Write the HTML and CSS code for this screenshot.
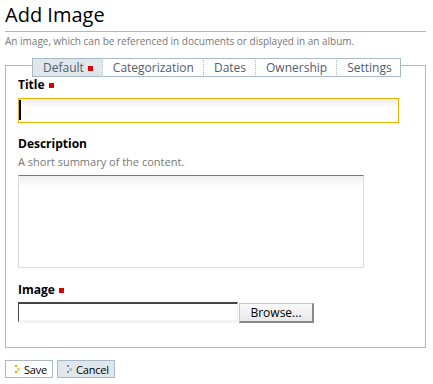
FILE: index.html
```html
<!DOCTYPE html>
<html lang="en">

<head>
    <meta charset="UTF-8">
    <title>Add Image</title>
    <link rel="stylesheet" href="styles.css">
</head>

<body>
    <h1 class="documentFirstHeading">Add Image</h1>
    <p class="documentDescription">An image, which can be referenced in documents or displayed in an album.</p>

    <form class="enableFormTabbing">
        <div class="formPanel">
            <!-- Tabs -->
            <ul class="formTabs">
                <li class="formTab selected">Default<span class="required"></span></li>
                <li class="formTab">Categorization</li>
                <li class="formTab">Dates</li>
                <li class="formTab">Ownership</li>
                <li class="formTab">Settings</li>
            </ul>

            <div class="field">
                <label class="formQuestion">Title<span class="required"></span></label>
                <div class="focusWrap">
                    <input type="text" class="inputTitle">
                    <span class="caret"></span>
                </div>
            </div>

            <div class="field">
                <label class="formQuestion">Description</label>
                <div class="formHelp">A short summary of the content.</div>
                <textarea class="inputDescription"></textarea>
            </div>

            <div class="field">
                <label class="formQuestion">Image<span class="required"></span></label>
                <div class="fileRow">
                    <span class="fileText"></span>
                    <button type="button" class="browse">Browse...</button>
                </div>
            </div>
        </div>

        <!-- Botões -->
        <div class="formControls">
            <button type="button" class="context">
                <svg width="5" height="9" viewBox="0 0 5 9">
                    <rect x="0" y="0" width="2" height="2" fill="#e8a400" />
                    <rect x="2" y="3" width="3" height="3" fill="#f2d27a" />
                    <rect x="0" y="6" width="2" height="2" fill="#e8a400" />
                </svg>
                Save
            </button>
            <button type="button" class="standalone">
                <svg width="5" height="9" viewBox="0 0 5 9">
                    <rect x="0" y="0" width="2" height="2" fill="#8194a5" />
                    <rect x="2" y="3" width="3" height="3" fill="#b6c3ce" />
                    <rect x="0" y="6" width="2" height="2" fill="#8194a5" />
                </svg>
                Cancel
            </button>
        </div>
    </form>
</body>

</html>
```

FILE: styles.css
```css
/* Geral */
body {
    margin: 0;
    padding: 0 7px 0 5px;
    font-family: 'Open Sans', sans-serif;
    background: #fff;
    color: #000;
}

.documentFirstHeading {
    margin: 0;
    padding: 3px 0 4px;
    font-size: 20px;
    line-height: 24px;
    font-weight: normal;
    border-bottom: 1px solid #a9b9c6;
}

.documentDescription {
    margin: 2px 0 0;
    font-size: 10px;
    line-height: 14px;
    color: #777;
}

/* Painel do formulário */
.formPanel {
    margin-top: 17px;
    width: 395px;
    padding: 0 12px 24px;
    border: 1px solid #a9b9c6;
}

.formTabs {
    display: flex;
    margin: -8px 0 0 14px;
    padding: 0;
    list-style: none;
}

.formTab {
    height: 17px;
    padding: 0 9px 0 10px;
    font-size: 12px;
    line-height: 17px;
    color: #4d6070;
    background: #fff;
    border-top: 1px solid #a9b9c6;
    border-bottom: 1px solid #a9b9c6;
    border-left: 1px dotted #a9b9c6;
}

.formTab:first-child {
    border-left: 1px solid #a9b9c6;
}

.formTab:last-child {
    padding-right: 8px;
    border-right: 1px solid #a9b9c6;
}

.formTab.selected {
    background: #dfe6ec;
}

.required {
    display: inline-block;
    width: 5px;
    height: 5px;
    margin-left: 4px;
    background: #dd0000;
    vertical-align: 1px;
}

.field {
    margin-top: 13px;
}

.field:first-of-type {
    margin-top: 0;
}

.formQuestion {
    display: block;
    font-size: 12px;
    line-height: 16px;
    font-weight: bold;
}

.formHelp {
    margin-top: 3px;
    font-size: 11px;
    line-height: 14px;
    color: #777;
}

/* Campos */
.focusWrap {
    position: relative;
    margin-top: 5px;
    width: 381px;
}

.inputTitle {
    display: block;
    box-sizing: border-box;
    width: 381px;
    height: 25px;
    margin: 0;
    border: 1px solid #efb000;
    background: linear-gradient(#ececec, #fff 9px);
    outline: none;
}

.caret {
    position: absolute;
    left: 1px;
    top: 2px;
    width: 2px;
    height: 20px;
    background: #000;
}

.inputDescription {
    display: block;
    box-sizing: border-box;
    width: 346px;
    height: 93px;
    margin: 6px 0 0;
    border: 1px solid #dcdcdc;
    border-top-color: #777;
    background: linear-gradient(#f0f0f0, #fff 12px);
    resize: none;
}

.field:last-child {
    margin-top: 14px;
}

.fileRow {
    display: flex;
    align-items: flex-start;
    margin-top: 4px;
}

.fileText {
    box-sizing: border-box;
    width: 220px;
    height: 21px;
    border-top: 2px solid #444;
    border-left: 1px solid #444;
    border-right: 1px solid #eee;
    border-bottom: 3px solid #f2f2f2;
}

.browse {
    box-sizing: border-box;
    height: 20px;
    width: 75px;
    margin: 1px 0 0 1px;
    padding: 0;
    font-family: 'Open Sans', sans-serif;
    font-size: 12px;
    color: #000;
    background: linear-gradient(#fafafa, #e8e8e8);
    border: 1px solid #c8c8c8;
    border-right: 2px solid #888;
    border-bottom: 2px solid #888;
}

/* Botões */
.formControls {
    display: flex;
    gap: 4px;
    margin-top: 12px;
}

.formControls button {
    display: flex;
    align-items: center;
    box-sizing: border-box;
    height: 18px;
    padding: 0 5px 0 9px;
    font-family: 'Open Sans', sans-serif;
    font-size: 11px;
    letter-spacing: -0.2px;
    color: #000;
    border: 1px solid #a9b9c6;
    cursor: pointer;
}

.formControls svg {
    margin-right: 4px;
}

.context {
    background: #fff;
}

.standalone {
    background: #dfe6ec;
}
```
